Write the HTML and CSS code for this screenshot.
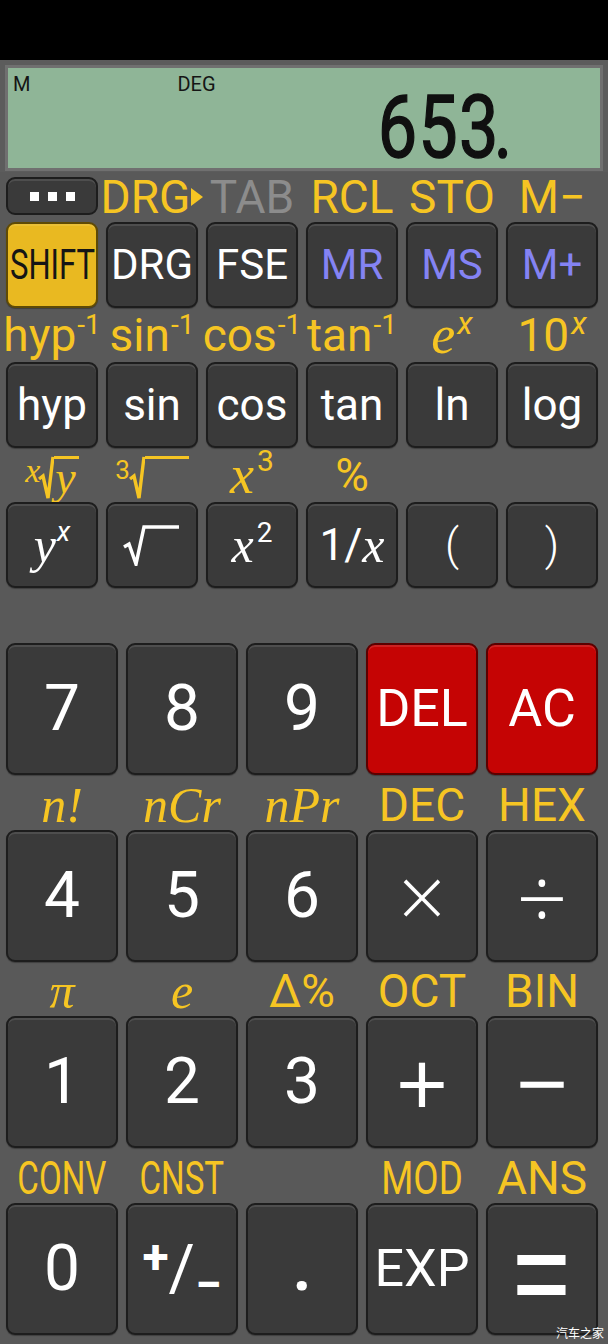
FILE: index.html
```html
<!DOCTYPE html>
<html lang="zh">

<head>
  <meta charset="UTF-8">
  <meta name="viewport" content="width=device-width, initial-scale=1.0">
  <title>Scientific Calculator</title>
  <link rel="stylesheet" href="styles.css">
</head>

<body>
  <div class="status-bar"></div>

  <div class="display">
    <div class="lcd">
      <div class="flags">
        <span>M</span>
        <span class="flag-deg">DEG</span>
      </div>
      <div class="readout"><span class="wide">65</span><span class="tight">3</span>.</div>
    </div>
  </div>

  <!-- function keys -->
  <div class="sci">
    <div class="row6 first-row">
      <div class="menu-btn"><span></span><span></span><span></span></div>
      <div class="lbl">DRG<span class="tri"></span></div>
      <div class="lbl dim">TAB</div>
      <div class="lbl">RCL</div>
      <div class="lbl">STO</div>
      <div class="lbl">M−</div>
    </div>

    <div class="row6 keys6">
      <div class="key shift"><span class="narrow">SHIFT</span></div>
      <div class="key">DRG</div>
      <div class="key">FSE</div>
      <div class="key mem">MR</div>
      <div class="key mem">MS</div>
      <div class="key mem">M+</div>
    </div>

    <div class="row6 lbl-row">
      <div class="lbl">hyp<span class="inv">-1</span></div>
      <div class="lbl">sin<span class="inv">-1</span></div>
      <div class="lbl">cos<span class="inv">-1</span></div>
      <div class="lbl">tan<span class="inv">-1</span></div>
      <div class="lbl"><i class="it big-e">e</i><i class="pow">x</i></div>
      <div class="lbl">10<i class="pow">x</i></div>
    </div>

    <div class="row6 keys6 fn">
      <div class="key">hyp</div>
      <div class="key">sin</div>
      <div class="key">cos</div>
      <div class="key">tan</div>
      <div class="key">ln</div>
      <div class="key">log</div>
    </div>

    <div class="row6 lbl-row">
      <div class="lbl">
        <span class="rad-lbl">
          <i class="it idx">x</i>
          <svg class="tick" width="16" height="46" viewBox="0 0 16 46"><path d="M1 25 L5 22 L10 44 L15 3" /></svg>
          <span class="vinc"><i class="it">y</i></span>
        </span>
      </div>
      <div class="lbl">
        <span class="rad-lbl">
          <span class="idx3">3</span>
          <svg class="tick" width="16" height="46" viewBox="0 0 16 46"><path d="M1 25 L5 22 L10 44 L15 3" /></svg>
          <span class="vinc empty"></span>
        </span>
      </div>
      <div class="lbl"><i class="it cube">x</i><span class="pow3">3</span></div>
      <div class="lbl">%</div>
      <div class="lbl"></div>
      <div class="lbl"></div>
    </div>

    <div class="row6 keys6 fn">
      <div class="key"><i class="it kx">y</i><i class="kpow">x</i></div>
      <div class="key">
        <svg width="58" height="42" viewBox="0 0 58 42"><path class="root" d="M1 23 L6 20 L13 40 L21 3 L56 3" /></svg>
      </div>
      <div class="key"><i class="it kx">x</i><span class="kpow2">2</span></div>
      <div class="key">1/<i class="it kx">x</i></div>
      <div class="key paren">(</div>
      <div class="key paren">)</div>
    </div>
  </div>

  <!-- number pad -->
  <div class="pad">
    <div class="row5 big">
      <div class="key num">7</div>
      <div class="key num">8</div>
      <div class="key num">9</div>
      <div class="key word red">DEL</div>
      <div class="key word red">AC</div>
    </div>

    <div class="row5 lbl-row2">
      <div class="lbl"><i class="it ser">n!</i></div>
      <div class="lbl"><i class="it ser">nCr</i></div>
      <div class="lbl"><i class="it ser">nPr</i></div>
      <div class="lbl">DEC</div>
      <div class="lbl">HEX</div>
    </div>

    <div class="row5 big">
      <div class="key num">4</div>
      <div class="key num">5</div>
      <div class="key num">6</div>
      <div class="key op times">×</div>
      <div class="key op divide">÷</div>
    </div>

    <div class="row5 lbl-row2 short">
      <div class="lbl"><i class="it ser">π</i></div>
      <div class="lbl"><i class="it ser">e</i></div>
      <div class="lbl">Δ%</div>
      <div class="lbl">OCT</div>
      <div class="lbl">BIN</div>
    </div>

    <div class="row5 big">
      <div class="key num">1</div>
      <div class="key num">2</div>
      <div class="key num">3</div>
      <div class="key op plus">+</div>
      <div class="key op minus">−</div>
    </div>

    <div class="row5 lbl-row2">
      <div class="lbl"><span class="squeeze">CONV</span></div>
      <div class="lbl"><span class="squeeze">CNST</span></div>
      <div class="lbl"></div>
      <div class="lbl"><span class="squeeze mod">MOD</span></div>
      <div class="lbl">ANS</div>
    </div>

    <div class="row5 big">
      <div class="key num">0</div>
      <div class="key pm"><span class="pm-plus">+</span><span class="pm-slash">/</span><span class="pm-minus">−</span></div>
      <div class="key num dot">.</div>
      <div class="key word">EXP</div>
      <div class="key op equals"><span class="eq">=</span></div>
    </div>
  </div>

  <div class="watermark">汽车之家</div>
</body>

</html>
```

FILE: styles.css
```css
* {
  box-sizing: border-box;
}

body {
  margin: 0;
  width: 608px;
  height: 1344px;
  background-color: #595959;
  font-family: Roboto, "Liberation Sans", sans-serif;
  position: relative;
  overflow: hidden;
}

.status-bar {
  height: 60px;
  background-color: #000;
}

/* display */
.display {
  background-color: #5c5c5c;
  padding: 5px 5px 1px;
}

.lcd {
  height: 106px;
  border: 3px solid #707070;
  background-color: #8fb597;
}

.flags {
  display: flex;
  height: 44px;
  padding: 6px 0 0 5px;
  font-size: 20px;
  line-height: 20px;
  color: #151515;
}

.flag-deg {
  margin-left: 147px;
}

.readout {
  text-align: right;
  padding-right: 75px;
  font-size: 60px;
  line-height: 50px;
  color: #101010;
  -webkit-text-stroke: 1px #101010;
  transform: scale(1.17, 1.45);
  transform-origin: 100% 46px;
}

.readout .wide {
  letter-spacing: 1px;
}

.readout .tight {
  letter-spacing: -4px;
}

/* function keys */
.sci {
  padding: 0 10px 0 6px;
}

.row6 {
  display: grid;
  grid-template-columns: repeat(6, minmax(0, 1fr));
  column-gap: 8px;
}

.first-row {
  height: 50px;
  align-items: center;
}

.menu-btn {
  height: 38px;
  margin-top: -2px;
  display: flex;
  align-items: center;
  justify-content: center;
  gap: 9px;
  background-color: #3a3a3a;
  border: 2px solid #1d1d1d;
  border-radius: 9px;
  box-shadow: inset 0 2px 0 rgba(255, 255, 255, 0.1);
}

.menu-btn span {
  width: 9px;
  height: 9px;
  background-color: #fff;
}

.lbl {
  display: flex;
  align-items: center;
  justify-content: center;
  color: #f6c523;
  font-size: 46px;
  line-height: 1;
  white-space: nowrap;
}

.lbl.dim {
  color: #8c8c8c;
}

.tri {
  width: 0;
  height: 0;
  margin-left: 1px;
  border-left: 12px solid #f6c523;
  border-top: 9px solid transparent;
  border-bottom: 9px solid transparent;
}

.keys6 {
  height: 86px;
  font-size: 42px;
}

.keys6.fn {
  font-size: 44px;
}

.lbl-row {
  height: 54px;
}

.key {
  display: flex;
  align-items: center;
  justify-content: center;
  color: #fff;
  line-height: 1;
  background-color: #3a3a3a;
  border: 2px solid #1d1d1d;
  border-radius: 9px;
  box-shadow: inset 0 2px 0 rgba(255, 255, 255, 0.1), 0 1px 1px rgba(0, 0, 0, 0.3);
}

.key.shift {
  background-color: #e9b921;
  border-color: #5f4a05;
  color: #151515;
}

.narrow {
  display: inline-block;
  transform: scaleX(0.74);
}

.key.mem {
  color: #8483f3;
}

.it {
  font-family: "Liberation Serif", "DejaVu Serif", serif;
  font-style: italic;
}

.inv {
  font-size: 28px;
  position: relative;
  top: -10px;
  margin-left: 1px;
}

.big-e {
  font-size: 54px;
}

.pow {
  font-size: 32px;
  font-style: italic;
  position: relative;
  top: -12px;
  margin-left: 2px;
}

/* radicals */
.rad-lbl {
  display: inline-flex;
  align-items: flex-start;
  height: 46px;
  margin-top: 4px;
}

.tick path {
  fill: none;
  stroke: #f6c523;
  stroke-width: 3.4;
  stroke-linejoin: miter;
}

.idx {
  font-size: 34px;
  margin-top: 0;
  margin-right: -2px;
}

.idx3 {
  font-size: 26px;
  margin-top: 3px;
  margin-right: -1px;
}

.vinc {
  margin-top: 1.5px;
  border-top: 3px solid #f6c523;
  font-size: 46px;
  line-height: 36px;
  padding: 0 3px 0 1px;
}

.vinc.empty {
  width: 44px;
  height: 34px;
}

.cube {
  font-size: 54px;
}

.pow3 {
  font-size: 30px;
  position: relative;
  top: -14px;
  margin-left: 3px;
}

.kx {
  font-size: 50px;
}

.kpow {
  font-size: 28px;
  position: relative;
  top: -13px;
  margin-left: 1px;
}

.kpow2 {
  font-size: 28px;
  position: relative;
  top: -12px;
  margin-left: 3px;
}

.root {
  fill: none;
  stroke: #fff;
  stroke-width: 3.5;
}

.paren {
  font-weight: 300;
}

/* number pad */
.pad {
  padding: 55px 10px 0 6px;
}

.row5 {
  display: grid;
  grid-template-columns: repeat(5, minmax(0, 1fr));
  column-gap: 8px;
}

.big {
  height: 132px;
}

.lbl-row2 {
  height: 55px;
  padding-top: 4px;
}

.lbl-row2.short {
  height: 54px;
}

.ser {
  font-size: 50px;
}

.squeeze {
  display: inline-block;
  transform: scaleX(0.72);
}

.squeeze.mod {
  transform: scaleX(0.8);
}

.key.num {
  font-size: 64px;
}

.key.dot {
  font-weight: 700;
}

.key.word {
  font-size: 52px;
}

.key.red {
  background-color: #c50404;
  border-color: #5c0000;
  box-shadow: inset 0 2px 0 rgba(255, 255, 255, 0.12), 0 1px 1px rgba(0, 0, 0, 0.3);
}

.key.op {
  font-family: "Open Sans", Roboto, sans-serif;
  font-weight: 300;
}

.times {
  font-size: 84px;
}

.divide {
  font-size: 90px;
  font-family: Roboto, sans-serif;
  font-weight: 700;
}

.key.op.plus,
.key.op.minus {
  font-size: 92px;
  font-weight: 400;
}

.key.op.equals {
  font-size: 100px;
  font-weight: 400;
}

.eq {
  display: inline-block;
  line-height: 60px;
  transform: scale(1.05, 1.5);
}

.pm {
  font-size: 48px;
  font-weight: 700;
}

.pm-plus {
  position: relative;
  top: -12px;
}

.pm-slash {
  font-size: 64px;
  font-weight: 400;
}

.pm-minus {
  position: relative;
  top: 16px;
}

.watermark {
  position: absolute;
  right: 4px;
  bottom: 3px;
  font-family: "Noto Sans CJK SC", sans-serif;
  font-size: 12px;
  color: #fff;
}
```
